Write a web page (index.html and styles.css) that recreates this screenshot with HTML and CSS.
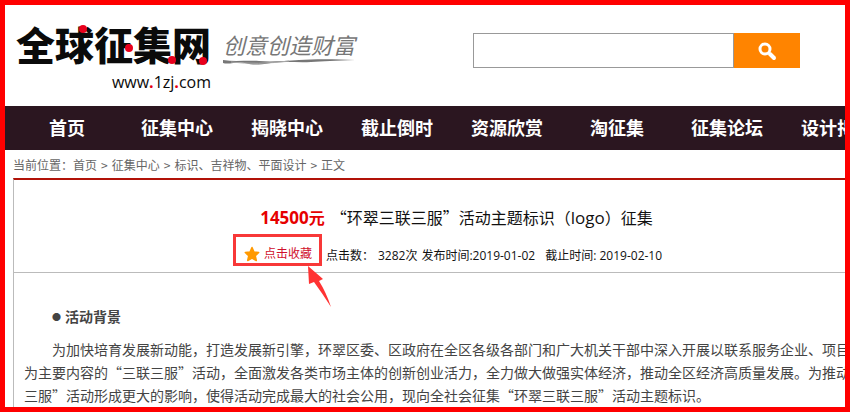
FILE: index.html
```html
<!DOCTYPE html>
<html lang="zh-CN">
<head>
<meta charset="utf-8">
<title>全球征集网</title>
<link rel="stylesheet" href="styles.css">
</head>
<body>
<header class="header">
  <a class="logo" href="#">
    <span class="logo-name">全球征集网</span>
    <span class="logo-url">www<b>.</b>1zj<b>.</b>com</span>
    <svg class="logo-dots" width="200" height="44" viewBox="0 0 200 44" aria-hidden="true">
      <circle cx="67" cy="8" r="4"/><circle cx="113" cy="27" r="4"/><circle cx="156" cy="39" r="4"/><circle cx="187" cy="40" r="4"/>
    </svg>
  </a>
  <div class="slogan">
    <span>创意创造财富</span>
    <svg width="134" height="8" viewBox="0 0 134 8" aria-hidden="true">
      <path d="M0 2C12 4 24 2 36 3S62 3 76 2S112 1 132 2C112 3 100 3 88 4S62 3 48 5S30 7 22 5S6 7 0 5Z" fill="#777"/>
      <path d="M8 4Q34 7 66 3" fill="none" stroke="#aaa"/>
    </svg>
  </div>
  <form class="search">
    <input type="text" aria-label="搜索">
    <button type="button" aria-label="搜索">
      <svg width="20" height="20" viewBox="0 0 20 20" fill="none" stroke="#fff">
        <circle cx="8" cy="8" r="5" stroke-width="3"/>
        <path d="M13 13L17 17" stroke-width="4" stroke-linecap="round"/>
      </svg>
    </button>
  </form>
</header>
<nav class="nav">
  <a href="#">首页</a><a href="#">征集中心</a><a href="#">揭晓中心</a><a href="#">截止倒时</a><a href="#">资源欣赏</a><a href="#">淘征集</a><a href="#">征集论坛</a><a href="#">设计揭晓</a>
</nav>
<div class="crumbs">当前位置：<a href="#">首页</a><i>&gt;</i><a href="#">征集中心</a><i>&gt;</i><a href="#">标识、吉祥物、平面设计</a><i>&gt;</i><span>正文</span></div>
<main class="article">
  <div class="article-head">
    <h1><strong><span class="latin">14500</span>元</strong><span>“环翠三联三服”活动主题标识（<span class="latin">logo</span>）征集</span></h1>
    <div class="meta">
      <a class="favorite" href="#">
        <svg width="16" height="16" viewBox="0 0 16 16" aria-hidden="true"><path d="M8 1.5L10 6L14.7 6.5L11.3 9.8L12.3 14.5L8 12.2L3.7 14.5L4.7 9.8L1.3 6.5L6 6Z" fill="#f90" stroke="#f90" stroke-width="1.5" stroke-linejoin="round"/></svg>
        <span>点击收藏</span>
        <svg class="arrow" width="28" height="44" viewBox="0 0 28 44" aria-hidden="true"><path d="M2 1L17 14L13 16Q20 27 25 42Q16 28 8 17L3 19Z" fill="#f33"/></svg>
      </a>
      <span>点击数：</span>
      <span>3282次</span>
      <span>发布时间:2019-01-02</span>
      <span class="deadline">截止时间: 2019-02-10</span>
    </div>
  </div>
  <div class="article-body">
    <h2><i>●</i>活动背景</h2>
    <p>
      <span class="line first">为加快培育发展新动能，打造发展新引擎，环翠区委、区政府在全区各级各部门和广大机关干部中深入开展以联系服务企业、项目</span>
      <span class="line">为主要内容的“三联三服”活动，全面激发各类市场主体的创新创业活力，全力做大做强实体经济，推动全区经济高质量发展。为推动</span>
      <span class="line">三服”活动形成更大的影响，使得活动完成最大的社会公用，现向全社会征集“环翠三联三服”活动主题标识。</span>
    </p>
  </div>
</main>
</body>
</html>
```
FILE: styles.css
```css
* { box-sizing: border-box; }
body {
  margin: 0;
  height: 100vh;
  border: 5px solid #f00;
  overflow: hidden;
  background: #fff;
  color: #444;
  font: 14px/23px "Noto Sans CJK SC", sans-serif;
}
a { color: inherit; text-decoration: none; }
i { font-style: normal; }

.header {
  display: flex;
  align-items: flex-start;
  padding: 16px 45px 12px 11px;
}
.logo {
  position: relative;
  display: flex;
  flex-direction: column;
  gap: 5px;
  color: #0a0a0a;
}
.logo-name {
  font-size: 39px;
  line-height: 44px;
  font-weight: 900;
}
.logo-url {
  align-self: flex-end;
  font: 16px/24px "Open Sans", sans-serif;
}
.logo-url b { color: #e60012; }
.logo-dots { position: absolute; left: 0; top: 0; fill: #e8001c; }
.slogan {
  display: flex;
  flex-direction: column;
  margin: 9px 0 0 12px;
  color: #777;
  font-size: 22px;
  line-height: 28px;
  font-weight: 400;
  font-style: italic;
}
.search { display: flex; margin: 12px 0 0 auto; height: 35px; }
.search input {
  width: 261px;
  border: 1px solid #999;
  border-radius: 0;
  padding: 0 8px;
  background: #fff;
  font: inherit;
  outline: 0;
}
.search button {
  display: flex;
  align-items: center;
  justify-content: center;
  width: 66px;
  padding: 0;
  border: 0;
  background: #ff8400;
}

.nav {
  display: flex;
  height: 44px;
  padding-left: 7px;
  background: #2b1620;
  color: #fff;
  font-size: 18px;
  line-height: 42px;
  font-weight: 700;
}
.nav a { flex: 0 0 110px; text-align: center; }

.crumbs {
  padding: 3px 8px 2px;
  color: #666;
  font-size: 12px;
}
.crumbs i { padding: 0 4px; }

/* The article column runs on past the right edge of the window. */
.article {
  margin: 0 -54px 0 8px;
  border-top: 2px solid #b11208;
  border-left: 1px solid #bbb;
}
.article-head {
  padding: 24px 0 6px;
  border-bottom: 1px solid #bbb;
  color: #111;
}
h1 {
  display: flex;
  justify-content: center;
  gap: 6px;
  margin: 0;
  font-size: 16px;
  line-height: 26px;
  font-weight: 400;
}
h1 strong { color: #e60000; }
.latin { font-family: "Open Sans", sans-serif; font-size: 17px; }
.meta {
  display: flex;
  justify-content: center;
  align-items: flex-end;
  gap: 4px;
  margin-top: 3px;
  padding-right: 18px;
  font: 12px/20px "Open Sans", "Noto Sans CJK SC", sans-serif;
}
.deadline { margin-left: 6px; }
.favorite {
  position: relative;
  display: flex;
  align-items: center;
  gap: 4px;
  height: 32px;
  padding: 8px 7px 0 8px;
  border: 3px solid #f83838;
  color: #d0102c;
}
.arrow { position: absolute; left: 70px; top: 28px; }

.article-body { padding: 32px 10px 0; }
h2 {
  display: flex;
  gap: 4px;
  margin: 0 0 10px 28px;
  font-size: 14px;
  line-height: 23px;
}
h2 i { font-size: 9px; }
p { margin: 0; }
.line { display: block; white-space: nowrap; }
.first { text-indent: 28px; }
```
